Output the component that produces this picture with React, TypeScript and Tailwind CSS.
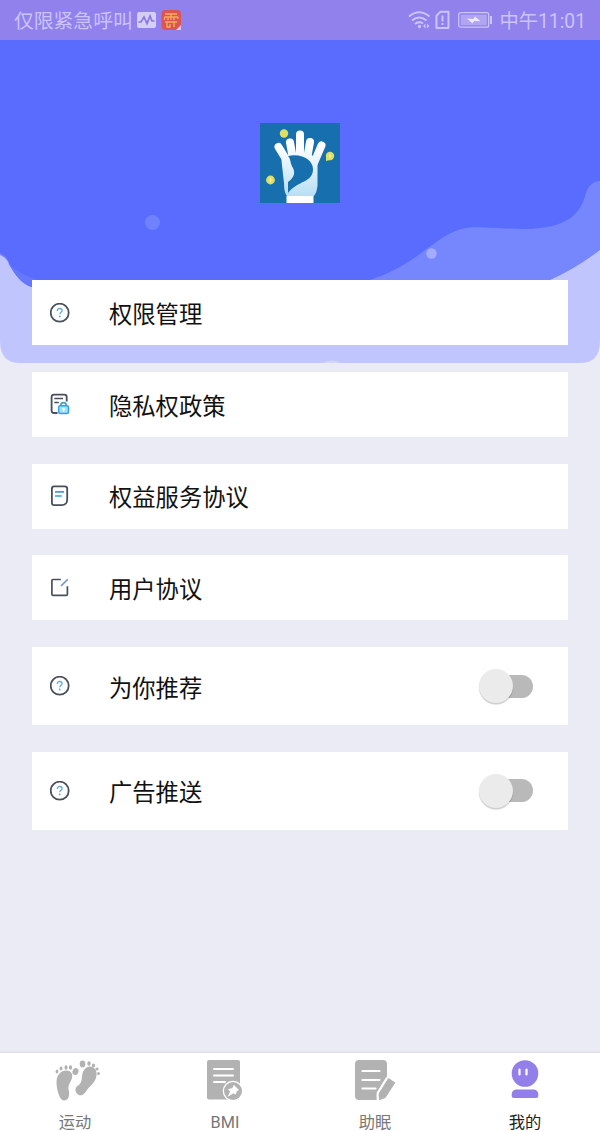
import type { ReactNode } from "react"

const textFont = "font-[Roboto,'Noto_Sans_CJK_SC',sans-serif]"

function HelpIcon() {
  return (
    <svg width="20" height="20" viewBox="0 0 20 20" fill="none">
      <circle cx="9.7" cy="9.7" r="9" stroke="#4a4f5c" strokeWidth="1.8" />
      <path d="M7.3 7.9c0-1.5 1-2.4 2.4-2.4s2.4.9 2.4 2.1c0 1.6-2.3 1.8-2.3 3.6" stroke="#5fa9d6" strokeWidth="1.3" />
      <circle cx="9.8" cy="13.4" r="0.9" fill="#5fa9d6" />
    </svg>
  )
}

function PrivacyIcon() {
  return (
    <svg width="20" height="22" viewBox="0 0 20 22" fill="none">
      <path d="M7.5 20H4Q1.6 20 1.6 17.6V4Q1.6 1.6 4 1.6H14.3Q16.7 1.6 16.7 4V8.5" stroke="#4a4f5c" strokeWidth="1.8" />
      <path d="M4.3 5.5H13M4.3 9.5H8.8" stroke="#4a4f5c" strokeWidth="1.5" />
      <path d="M10.8 13V12.300a2.700 2.700 0 0 1 5.400 0V13" stroke="#3d9fd8" strokeWidth="1.6" />
      <rect x="8.700" y="12.800" width="9.800" height="7.600" rx="1.500" fill="#a9dcf7" stroke="#3d9fd8" strokeWidth="1.500" />
      <path d="M13.600 14.800v3.600M12.300 16.200h2.600" stroke="#fff" strokeWidth="1.200" />
    </svg>
  )
}

function NoteIcon() {
  return (
    <svg width="20" height="22" viewBox="0 0 20 22" fill="none">
      <path d="M4 1.300H14.700Q17.200 1.300 17.200 3.700V14.500Q17.200 20.100 11.600 20.100H4Q1.900 20.100 1.900 17.700V3.700Q1.900 1.300 4 1.300Z" stroke="#4a4f5c" strokeWidth="1.800" />
      <path d="M5 6.800H14M5 11H11.800" stroke="#35a3dc" strokeWidth="1.700" />
    </svg>
  )
}

function EditIcon() {
  return (
    <svg width="20" height="20" viewBox="0 0 20 20" fill="none">
      <path d="M10.800 1.500H3Q1.900 1.500 1.900 2.600V16.300Q1.900 17.400 3 17.400H16.200Q17.400 17.400 17.400 16.300V8.200" stroke="#4a4f5c" strokeWidth="1.700" />
      <path d="M11 8L17.800 1.200" stroke="#6b8fd6" strokeWidth="1.600" />
    </svg>
  )
}

function Toggle() {
  return (
    <button type="button" role="switch" aria-checked="false" className="flex h-9 items-center">
      <span className="z-10 size-[34px] rounded-full bg-[#ebebeb] shadow-[0_1.5px_1px_rgba(0,0,0,0.2)]" />
      <span className="-ml-5 h-[23px] w-10 rounded-full bg-[#b9b9b9]" />
    </button>
  )
}

type RowProps = { icon: ReactNode; label: string; toggle?: boolean }

const rows: RowProps[] = [
  { icon: <HelpIcon />, label: "权限管理" },
  { icon: <PrivacyIcon />, label: "隐私权政策" },
  { icon: <NoteIcon />, label: "权益服务协议" },
  { icon: <EditIcon />, label: "用户协议" },
  { icon: <HelpIcon />, label: "为你推荐", toggle: true },
  { icon: <HelpIcon />, label: "广告推送", toggle: true },
]

function Row({ icon, label, toggle }: RowProps) {
  return (
    <div className={`flex items-center bg-white pr-[35px] pl-[18px] ${toggle ? "h-[78px]" : "h-[65px]"}`}>
      <span className="flex w-[59px]">{icon}</span>
      <span className="flex-1 pt-[6px] text-[23.3px] leading-none text-[#111]">{label}</span>
      {toggle && <Toggle />}
    </div>
  )
}

function Waves() {
  return (
    <svg className="absolute top-0 left-0" width="600" height="363" viewBox="0 0 600 363">
      <path d="M0 40H600V341Q600 363 580 363H20Q0 363 0 341Z" fill="#c0c5fd" />
      <path d="M0 40H600V250Q575 269 550 280L420 340H90L32 287C17 282 12 267 6 259C4 257 2 256 0 255Z" fill="#7687fe" />
      <path d="M0 40H600V181C591 182 588 187 586 193C580 216 566 228 526 229C495 229 475 225 461 229C432 238 420 263 370 280V300H50V287H32C17 282 12 268 6 257L0 253Z" fill="#5a6cfe" />
      <path d="M8 263Q20 275 38 280V288L32 287C20 284 14 272 8 263Z" fill="#6678fa" />
      <circle cx="152.5" cy="222.5" r="7.5" fill="#7081fe" />
      <circle cx="431.5" cy="253.5" r="5.2" fill="#a2adff" />
      <path d="M322 363Q332 358 342 363Z" fill="#d2d5fb" />
    </svg>
  )
}

function HandLogo() {
  return (
    <svg width="80" height="80" viewBox="0 0 80 80" fill="none">
      <defs>
        <linearGradient id="glove" gradientUnits="userSpaceOnUse" x1="0" y1="10" x2="0" y2="72">
          <stop offset="0.2" stopColor="#fff" />
          <stop offset="1" stopColor="#b9dff6" />
        </linearGradient>
      </defs>
      <rect width="80" height="80" fill="#176fae" />
      <path
        d="M18.5 24L27 38M30 19.500L33 36M40 11.500V36M50 19L47 36M61.500 22.500L54 40"
        stroke="url(#glove)"
        strokeWidth="8"
        strokeLinecap="round"
      />
      <path d="M22 34L31 31H50L57.500 36V63Q57 69 54 73H27Q24 70 24 60L21.500 38Z" fill="url(#glove)" />
      <path d="M28 33C43 30 53 38 53 46C53 60 38 57 28 70V59C35 54 35 49 33 45C30 41 31 36 28 33Z" fill="#176fae" />
      <rect x="26.500" y="73" width="27" height="7" fill="#fff" />
      <circle cx="24" cy="10.500" r="4.200" fill="#dfdf63" />
      <circle cx="70" cy="33" r="4.200" fill="#dfdf63" />
      <path d="M66 33V38L70 37Z" fill="#dfdf63" />
      <circle cx="10.500" cy="57" r="4.400" fill="#dfdf63" />
      <path d="M10.500 55V59M70 31.500V34.500" stroke="#f5f3ae" strokeWidth="1.500" />
    </svg>
  )
}

function StatusBar() {
  return (
    <header className="relative flex h-10 items-center justify-between bg-[#9181ed] px-[14px] text-[19.8px] leading-none text-[#cbc3fa]">
      <div className="flex items-center">
        <span className="pt-[3px]">仅限紧急呼叫</span>
        <svg className="ml-[4px]" width="19" height="16" viewBox="0 0 19 16">
          <rect width="19" height="16" rx="2" fill="#d5cff8" />
          <path d="M1.500 10H4L7 5L10 11.500L13 4L15 9H17.500" fill="none" stroke="#8678dc" strokeWidth="1.700" />
        </svg>
        <svg className="ml-[5px]" width="21" height="22" viewBox="0 0 21 22">
          <rect x="0.500" y="1" width="19.500" height="20" rx="4" fill="#dc5454" />
          <path d="M4 5H16M3.500 8V11M17 8V10M3.500 8H17M10 5V11M6 10H8M12 10H14M4 13H16M6 13V18H9V15M13 13V18" fill="none" stroke="#f3ae5b" strokeWidth="1.300" />
          <path d="M15 21L20 16V21Z" fill="#d8c7ed" />
        </svg>
      </div>
      <div className="flex items-center">
        <svg width="23" height="20" viewBox="0 0 23 20" fill="none" stroke="currentColor" strokeWidth="2">
          <path d="M1 6.500Q11 -2 21.500 6.500M4 10.500Q11 4.500 18.500 10.500M7 14Q11 10.500 15 13.500" />
          <circle cx="11.500" cy="16.500" r="1.700" fill="currentColor" stroke="none" />
          <path d="M17.500 13.500L15 16L17.500 18.500ZM19 13.500L21.500 16L19 18.500Z" fill="currentColor" stroke="none" />
        </svg>
        <svg className="ml-[4px]" width="15" height="20" viewBox="0 0 15 20" fill="none" stroke="currentColor" strokeWidth="2">
          <path d="M5.500 1.800H13.500V18H1.500V5.800Z" strokeLinejoin="round" />
          <path d="M7.500 5.500V11.500M7.500 13V15" />
        </svg>
        <svg className="ml-[8px]" width="35" height="18" viewBox="0 0 35 18">
          <rect x="0.700" y="1.700" width="30" height="14.500" rx="2" fill="none" stroke="currentColor" strokeWidth="1.300" />
          <rect x="2.700" y="3.700" width="26" height="10.500" fill="#b0a5f3" />
          <path d="M9 7.500L15.500 8L17 5.500L22.500 10.300L16 10L14.500 12.500Z" fill="#eeeaff" />
          <rect x="32" y="5" width="2" height="8" fill="currentColor" />
        </svg>
        <span className="ml-[6px] pt-[3px] text-[19.3px]">中午11:01</span>
      </div>
    </header>
  )
}

function FeetIcon() {
  return (
    <svg className="ml-[5px]" width="46" height="42" viewBox="0 0 46 42" fill="#b2b2b2">
      <path d="M1.500 22C1.500 15 6 10.500 11 10.500C16 10.500 18 14 17 18C16 22 13 24 13.500 29C15 35 14 40.500 9 40.500C4 40.500 1.500 28 1.500 22Z" />
      <path d="M28 12C30 7 35 5 39 8C43 11 42 18 39 22C36 26 34 27 32 30C29 35 26 36.500 23 34.500C19 31 20 27 24 25C28 21 26 17 28 12Z" />
      <ellipse cx="20.500" cy="11.500" rx="3" ry="3.500" transform="rotate(20 20.500 11.500)" />
      <ellipse cx="15.500" cy="7.500" rx="1.600" ry="2.200" />
      <ellipse cx="11" cy="7.500" rx="1.500" ry="2.200" />
      <ellipse cx="6" cy="8.500" rx="1.500" ry="2" />
      <ellipse cx="2" cy="11.500" rx="1.400" ry="1.900" />
      <ellipse cx="27.500" cy="4" rx="2.800" ry="3.400" />
      <ellipse cx="34" cy="3.500" rx="1.700" ry="2.200" />
      <ellipse cx="38.500" cy="5.500" rx="1.600" ry="2.100" />
      <circle cx="42" cy="9" r="1.600" />
      <circle cx="43.500" cy="13.500" r="1.500" />
    </svg>
  )
}

function RecordIcon() {
  return (
    <svg width="36" height="42" viewBox="0 0 36 42">
      <rect x="0" y="0" width="33" height="39.500" rx="2" fill="#b2b2b2" />
      <path d="M7 9H26M7 15.500H26M7 22H18" stroke="#fff" strokeWidth="2" strokeLinecap="round" />
      <circle cx="26" cy="31" r="10.300" fill="#fff" />
      <circle cx="26" cy="31" r="9" fill="#b2b2b2" />
      <path d="M27 25.500L31.500 30L29.500 31L28.500 34L26 33L21.500 36L23.500 31.500L21.500 29.500L25.500 28.500Z" fill="#fff" stroke="#fff" strokeWidth="0.8" />
    </svg>
  )
}

function SleepIcon() {
  return (
    <svg width="40" height="42" viewBox="0 0 40 42">
      <path d="M4 0H28Q32 0 32 4V18L23 32V40H4Q0 40 0 36V4Q0 0 4 0Z" fill="#b2b2b2" />
      <path d="M7.500 11H24.500M7.500 20H24.500M7.500 28.500H20.500" stroke="#fff" strokeWidth="2.200" strokeLinecap="round" />
      <path d="M33.500 18.800L39.500 22.800L30 37.500L24.500 39.500L24 34Z" fill="#b2b2b2" stroke="#b2b2b2" strokeWidth="1.200" strokeLinejoin="round" />
      <path d="M22.500 41V33L32 17.500" fill="none" stroke="#fff" strokeWidth="1.800" />
    </svg>
  )
}

function ProfileIcon() {
  return (
    <svg width="28" height="42" viewBox="0 0 28 42" fill="#937fe9">
      <circle cx="14" cy="13.500" r="13.300" />
      <path d="M8.500 9.500V14.500M15.500 9.500V14.500" stroke="#fff" strokeWidth="2.200" strokeLinecap="round" />
      <path d="M4.500 29.500H23.500Q27.300 30.500 27.300 34.500V36Q27.300 38 25 38H3Q0.700 38 0.700 36V34.500Q0.700 30.500 4.500 29.500Z" />
    </svg>
  )
}

const tabs = [
  { icon: <FeetIcon />, label: "运动" },
  { icon: <RecordIcon />, label: "BMI" },
  { icon: <SleepIcon />, label: "助眠" },
  { icon: <ProfileIcon />, label: "我的", active: true },
]

export default function App() {
  return (
    <div className={`relative flex h-[1131px] w-[600px] flex-col overflow-hidden bg-[#eaebf4] ${textFont}`}>
      <Waves />
      <StatusBar />
      <main className="relative flex-1">
        <div className="flex h-60 justify-center pt-[83px]">
          <HandLogo />
        </div>
        <div className="flex flex-col gap-[26.8px] px-8">
          {rows.map((row) => (
            <Row key={row.label} {...row} />
          ))}
        </div>
      </main>
      <nav className="relative grid h-[78px] grid-cols-4 bg-white shadow-[0_-1px_2px_rgba(0,0,0,0.08)]">
        {tabs.map((tab) => (
          <div key={tab.label} className="flex flex-col items-center pt-[7px]">
            {tab.icon}
            <span className={`mt-[13px] text-[16.3px] leading-none ${tab.active ? "text-[#222]" : "text-[#777]"}`}>
              {tab.label}
            </span>
          </div>
        ))}
      </nav>
    </div>
  )
}
